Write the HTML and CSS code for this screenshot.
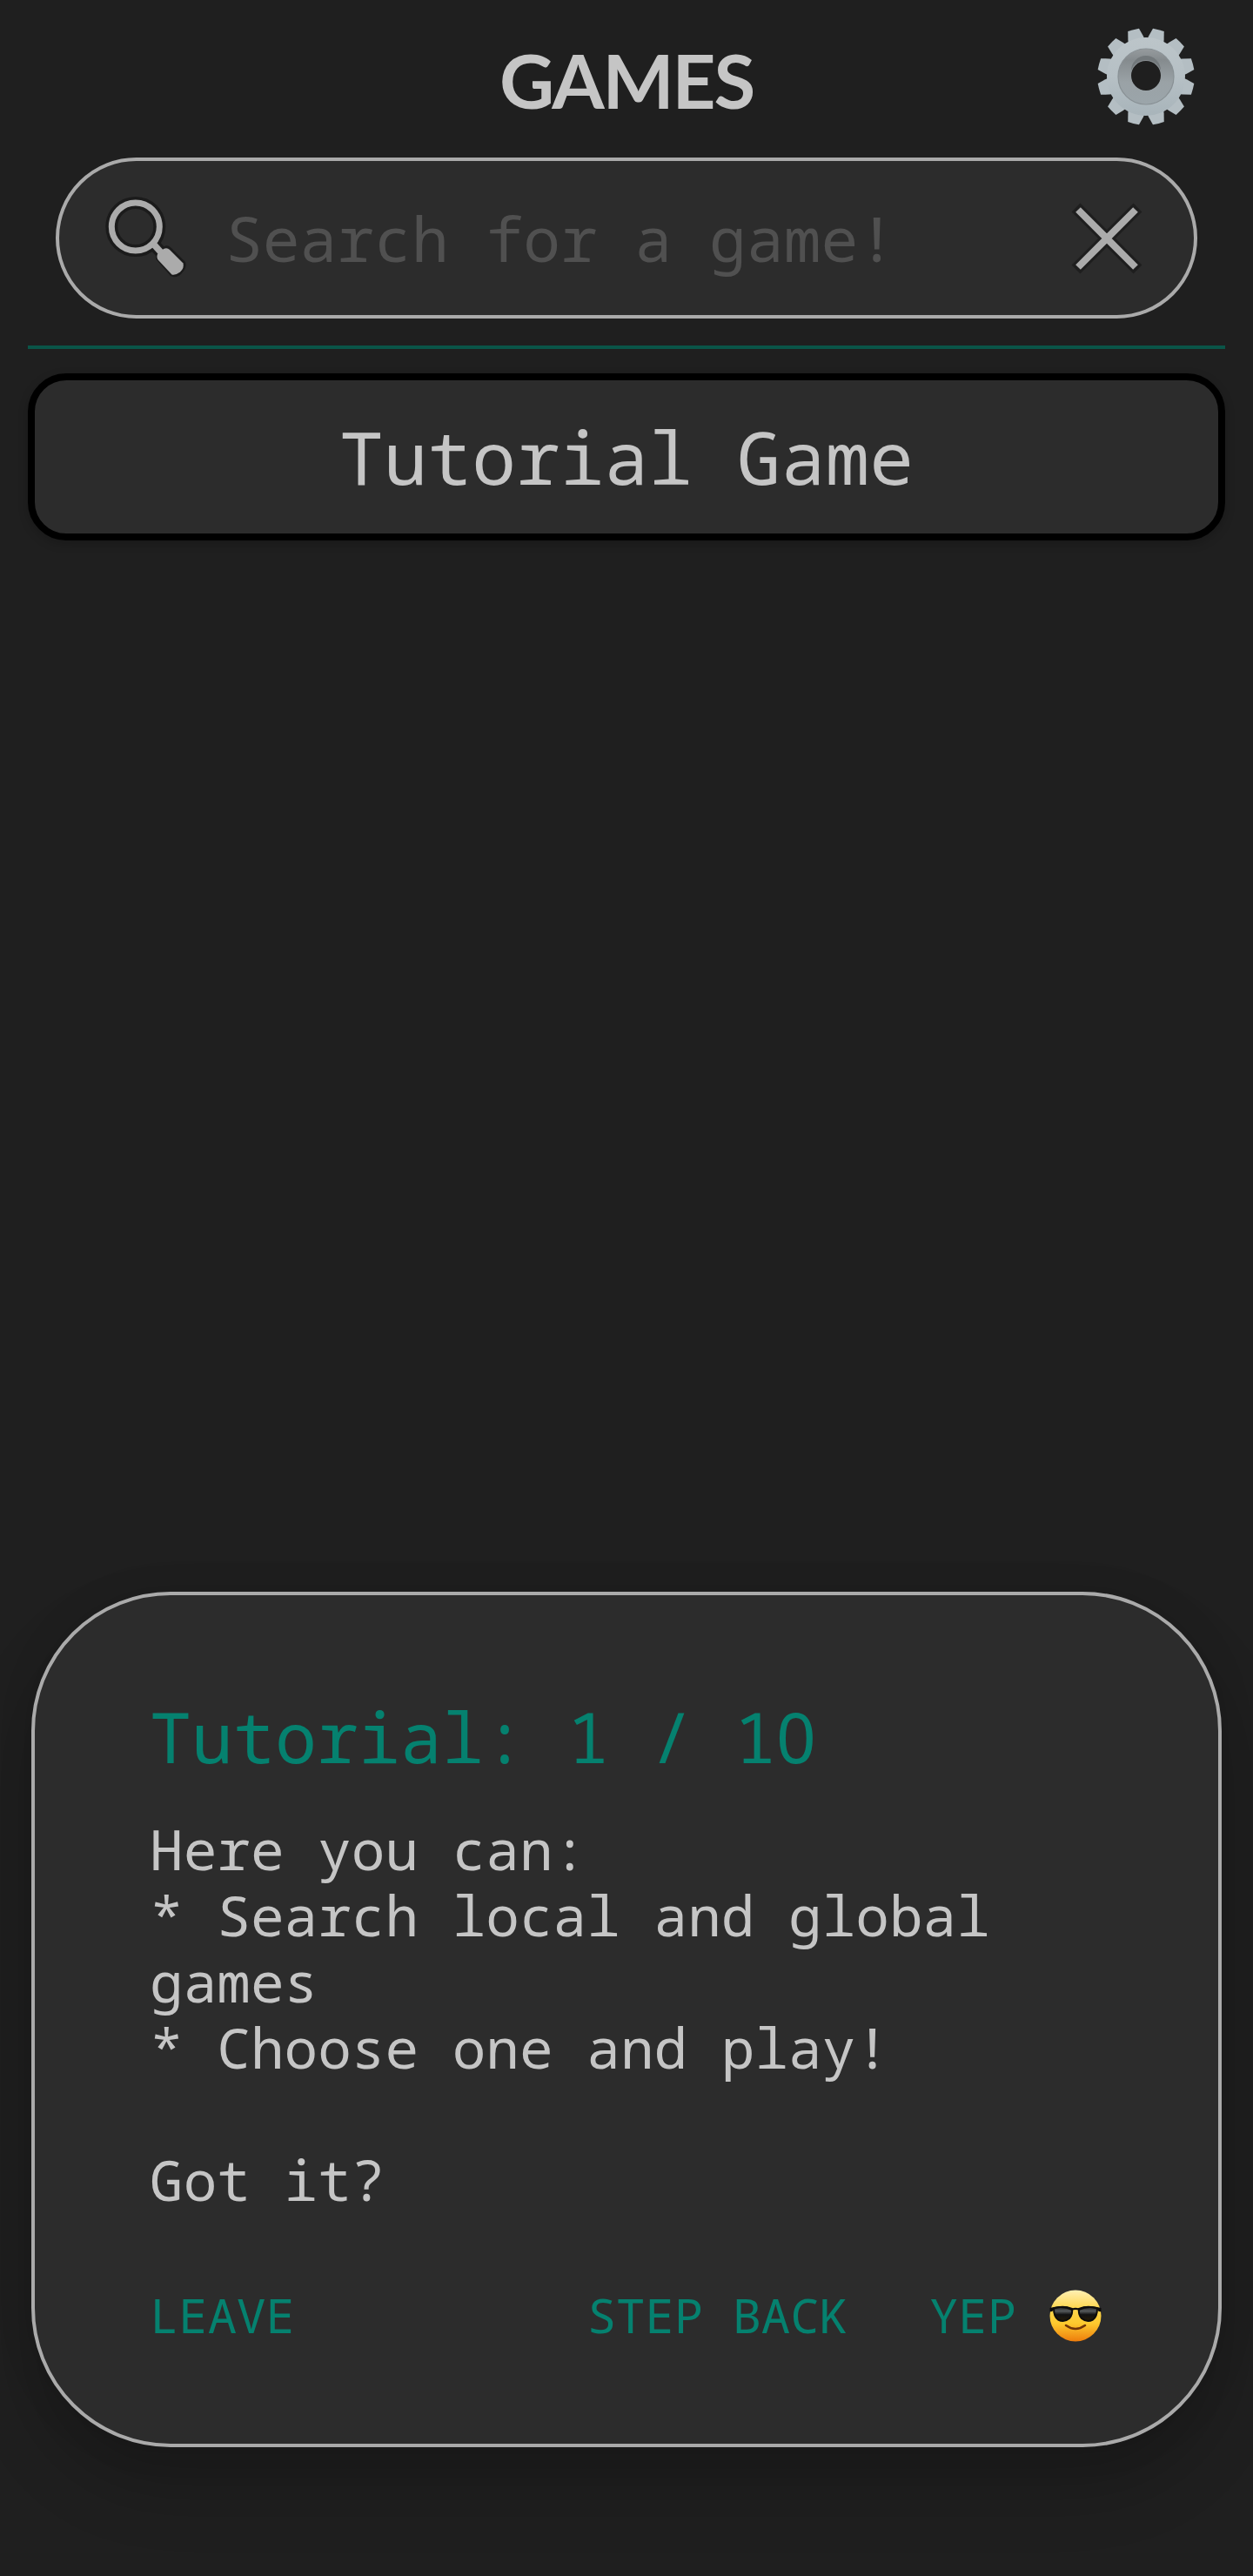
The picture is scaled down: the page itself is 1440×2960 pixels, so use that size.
FILE: index.html
```html
<!DOCTYPE html>
<html lang="en">
<head>
<meta charset="utf-8">
<title>Games</title>
<link rel="stylesheet" href="styles.css">
</head>
<body>
<main class="screen">
  <header class="header">
    <h1 class="title">GAMES</h1>
    <button class="settings" aria-label="Settings">
      <svg width="114" height="114" viewBox="-57 -57 114 114">
        <defs>
          <linearGradient id="metal" x1="0" y1="0" x2="0" y2="1"><stop offset="0" stop-color="#bcc5c9"/><stop offset=".5" stop-color="#b6c0c5"/><stop offset="1" stop-color="#a8b4ba"/></linearGradient>
          <linearGradient id="hub" x1="0" y1="0" x2="0" y2="1"><stop offset="0" stop-color="#969b9e"/><stop offset=".2" stop-color="#858b8e"/><stop offset=".6" stop-color="#9aa2a6"/><stop offset="1" stop-color="#9ba5aa"/></linearGradient>
          <path id="tooth" d="M-10 -40L-9 -46L-6.600 -55.500Q0 -56 6.600 -55.500L9 -46L10 -40Z"/>
        </defs>
        <mask id="hole"><rect x="-57" y="-57" width="114" height="114" fill="#fff"/><circle cy="-1" r="17" fill="#000"/></mask>
        <g mask="url(#hole)">
          <g fill="#b4bec3">
            <use href="#tooth" transform="rotate(15)"/><use href="#tooth" transform="rotate(45)"/><use href="#tooth" transform="rotate(75)"/>
            <use href="#tooth" transform="rotate(105)"/><use href="#tooth" transform="rotate(135)"/><use href="#tooth" transform="rotate(165)"/>
            <use href="#tooth" transform="rotate(195)"/><use href="#tooth" transform="rotate(225)"/><use href="#tooth" transform="rotate(255)"/>
            <use href="#tooth" transform="rotate(285)"/><use href="#tooth" transform="rotate(315)"/><use href="#tooth" transform="rotate(345)"/>
          </g>
          <circle r="45" fill="url(#metal)"/>
          <circle r="32" fill="url(#hub)" stroke="#899195" stroke-width="1.2"/>
          <path d="M-17 -5A17 17 0 0 1 17 -5A18 18 0 0 0 -17 -5Z" transform="translate(0 -2)" fill="#72787b"/>
        </g>
      </svg>
    </button>
  </header>

  <div class="search">
    <svg class="search-icon" width="100" height="100" viewBox="118 225 100 100">
      <g fill="none" stroke="#1b1b1b" stroke-linejoin="round">
        <circle cx="155.8" cy="261.5" r="27.5" stroke-width="14"/>
        <path d="M176 281L185 291" stroke-width="14"/>
        <path d="M184 293L190 287.500Q192 286 194 288L210 304Q211 308 206 313Q202 317 198 315L183 298Q182 296 184 293Z" stroke-width="7"/>
      </g>
      <circle cx="155.800" cy="261.500" r="27.500" fill="none" stroke="#ababab" stroke-width="7"/>
      <path d="M176 281L185 291" stroke="#ababab" stroke-width="7.500"/>
      <path d="M181 293L188 287Q192 285 195 288L210.500 303.500Q212 309 207 313.500Q202 317.500 197.500 316.500L182 300Q179.500 297 181 293Z" fill="#ababab"/>
    </svg>
    <span class="placeholder">Search for a game!</span>
    <svg class="clear-icon" width="84" height="84" viewBox="-42 -42 84 84">
      <path d="M-35.500 -35.500L35.500 35.500M35.500 -35.500L-35.500 35.500" stroke="#1e1e1e" stroke-width="14"/>
      <path d="M-33 -33L33 33M33 -33L-33 33" stroke="#ababab" stroke-width="8"/>
    </svg>
  </div>

  <div class="divider"></div>
  <button class="game">Tutorial Game</button>

  <section class="dialog">
    <h2 class="dialog-title">Tutorial: 1 / 1<span class="zero">0</span></h2>
    <p class="dialog-text">Here you can:
* Search local and global
games
* Choose one and play!

Got it?</p>
    <div class="actions">
      <button class="action">LEAVE</button>
      <button class="action back">STEP BACK</button>
      <button class="action yep"><span>YEP</span>
        <svg class="emoji" width="62" height="62" viewBox="-31 -31 62 62">
          <defs>
            <linearGradient id="face" x1="0" y1="0" x2="0" y2="1"><stop offset="0" stop-color="#fff0b4"/><stop offset=".35" stop-color="#fdd750"/><stop offset=".65" stop-color="#fdc92e"/><stop offset="1" stop-color="#ee7d0c"/></linearGradient>
            <linearGradient id="lens" x1="0" y1="0" x2="0" y2="1"><stop offset="0" stop-color="#242628"/><stop offset=".3" stop-color="#55595b"/><stop offset=".55" stop-color="#111"/><stop offset="1" stop-color="#241a08"/></linearGradient>
          </defs>
          <circle r="29.500" fill="url(#face)"/>
          <g fill="url(#lens)" stroke="#0c0c0c" stroke-width="2">
            <path d="M-25 -8.500Q-14 -12 -4 -8Q-3 -1 -7 3Q-13 8 -20 4.500Q-25 1 -25 -8.500Z"/>
            <path d="M25 -8.500Q14 -12 4 -8Q3 -1 7 3Q13 8 20 4.500Q25 1 25 -8.500Z"/>
          </g>
          <path d="M-29.500 -9Q-14 -13 -4 -8.500Q0 -10 4 -8.500Q14 -13 29.500 -9V-5Q26 -4 25 -8Q14 -11 4 -6Q0 -8 -4 -6Q-14 -11 -25 -8Q-26 -4 -29.500 -5Z" fill="#0c0c0c"/>
          <path d="M-11 11Q0 19 11 11" fill="none" stroke="#703408" stroke-width="2.600" stroke-linecap="round"/>
        </svg>
      </button>
    </div>
  </section>
</main>
</body>
</html>
```
FILE: styles.css
```css
* { box-sizing: border-box; }
body { margin: 0; background: #1f1f1f; }
button {
  padding: 0;
  border: 0;
  background: none;
  color: inherit;
  font: inherit;
}
svg { display: block; flex: none; }

.screen {
  display: flex;
  flex-direction: column;
  height: 2960px;
  padding: 0 32px 148px;
  overflow: hidden;
  color: #c5c5c5;
  font-family: "Noto Sans Mono", "Droid Sans Mono", "DejaVu Sans Mono", monospace;
}
.header {
  display: grid;
  grid-template-columns: 1fr auto 1fr;
  align-items: center;
  height: 181px;
}
.title {
  grid-column: 2;
  margin: 2px 0 0;
  font: 700 87px/120px Lato, sans-serif;
  letter-spacing: -2.200px;
}
.settings {
  justify-self: end;
  margin: 0 34px 6px 0;
}
.search {
  display: flex;
  align-items: center;
  height: 185px;
  margin: 0 32px;
  padding: 0 58px 0 50px;
  border: 4px solid #aaa;
  border-radius: 93px;
  background: #2c2c2c;
}
.placeholder {
  flex: 1;
  margin: 0 0 0 41px;
  color: #505050;
  font-size: 71.300px;
  line-height: 84px;
}
.divider {
  flex: none;
  height: 4px;
  margin: 31px 0 28px;
  background: #0a5548;
}
.game {
  height: 192px;
  border: 8px solid #000;
  border-radius: 44px;
  background: #2c2c2c;
  box-shadow: 0 4px 12px rgba(0, 0, 0, .2);
  font-size: 84.600px;
  line-height: 100px;
}
.dialog {
  height: 983px;
  margin: auto 4px 0;
  padding: 112px 132px 0;
  border: 4px solid #aaa;
  border-radius: 160px;
  background: #2c2c2c;
  box-shadow: 0 44px 80px rgba(0, 0, 0, .2), 0 0 40px rgba(0, 0, 0, .1);
}
.dialog-title {
  margin: 0;
  color: #05816f;
  font-size: 80px;
  font-weight: 400;
  line-height: 100px;
}
.zero { font-family: "Noto Sans", sans-serif; }
.dialog-text {
  margin: 41px 0 0;
  font-size: 64.400px;
  line-height: 76px;
  white-space: pre;
}
.actions {
  display: flex;
  align-items: center;
  height: 76px;
  margin-top: 79px;
  color: #05816f;
  font-size: 55.600px;
}
.back { margin-left: auto; }
.yep {
  display: flex;
  align-items: center;
  gap: 37px;
  margin: 0 1px 0 93px;
}
.emoji { margin-top: 3px; }
```
